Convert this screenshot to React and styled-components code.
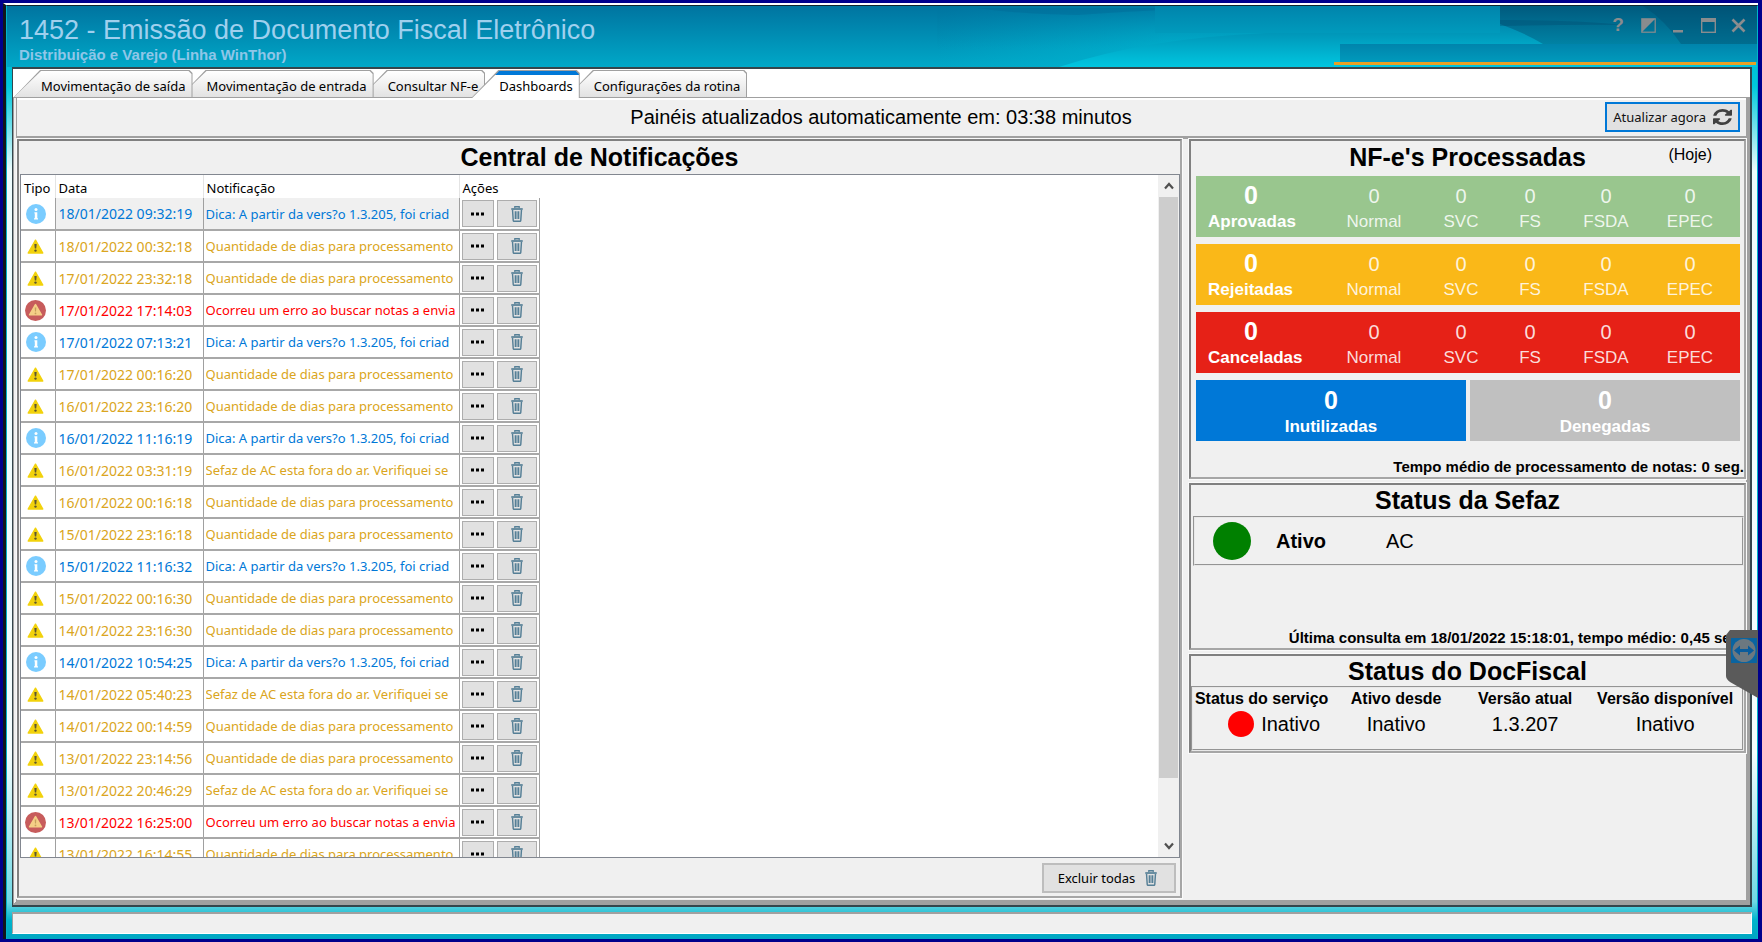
import styled, { createGlobalStyle, css } from "styled-components";

const GlobalStyle = createGlobalStyle`
  * {
    box-sizing: border-box;
  }
  body {
    margin: 0;
    background: #00008c;
    color: #000;
    font-family: "Liberation Sans", Arial, sans-serif;
  }
  button {
    font: inherit;
    color: inherit;
    cursor: pointer;
  }
  h1, h2, p {
    margin: 0;
  }
`;

const tahoma = css`
  font-family: "Noto Sans", Tahoma, sans-serif;
  font-size: 13px;
`;

const Desktop = styled.div`
  height: 100vh;
  padding: 3px 4px 3px 3px;
  background: #00008c;
  display: flex;
`;

const Window = styled.div`
  position: relative;
  flex: 1;
  min-width: 0;
  display: flex;
  flex-direction: column;
  border-top: 2px solid #fff;
  border-left: 3px solid #10161c;
`;

const Frame = styled.div`
  flex: 1;
  min-height: 0;
  display: flex;
  flex-direction: column;
  border-top: 1px solid #10242c;
  border-left: 1px solid #00b4cc;
  border-right: 1px solid #00b4cc;
  background: linear-gradient(
    #00a8c4 0,
    #00c8dc 80px,
    #eefcfd 165px,
    #f4fdfe 80%,
    #70d8e4 96%,
    #00b4cc 98%,
    #00a6c2 100%
  );
`;

const Header = styled.header`
  position: relative;
  height: 61px;
  flex: none;
  display: flex;
  justify-content: space-between;
  color: #9fd0ee;
  background: linear-gradient(#0074a0, #00a8c8);
  overflow: hidden;
`;

const HeaderArt = styled.svg`
  position: absolute;
  top: 0;
  right: 0;
  height: 61px;
  width: 820px;
`;

const Titles = styled.div`
  position: relative;
  padding: 8px 0 0 12px;
`;

const Title = styled.h1`
  font-size: 27px;
  font-weight: 400;
  line-height: 32px;
`;

const Subtitle = styled.p`
  font-size: 15px;
  font-weight: 700;
  line-height: 18px;
  color: #8fc6e8;
`;

const WindowButtons = styled.div`
  position: relative;
  display: flex;
  height: 38px;
  padding-right: 4px;
`;

const WindowButton = styled.button`
  width: 30px;
  padding: 0;
  border: 0;
  background: none;
  color: #8a8c8e;
  display: grid;
  place-items: center;
  font-size: 19px;
  font-weight: 700;
`;

const Main = styled.main`
  flex: 1;
  min-height: 0;
  margin: 0 5px;
  display: flex;
  flex-direction: column;
  background: #fff;
  border: 2px solid #34454c;
  border-left-width: 1px;
`;

const TabBar = styled.div`
  display: flex;
  align-items: flex-end;
  height: 29px;
  flex: none;
  border-bottom: 1px solid #a0a0a0;
`;

const Tab = styled.button`
  ${tahoma}
  position: relative;
  z-index: ${(p) => p.$order};
  height: 28px;
  margin: 0 -14px -1px 0;
  padding: 4px 7px 0 28px;
  border: 0;
  white-space: nowrap;
  background: #a0a0a0;
  clip-path: polygon(0 100%, 27px 0, calc(100% - 3px) 0, 100% 3px, 100% 100%);

  &::before {
    content: "";
    position: absolute;
    inset: 1px 1px ${(p) => (p.$active ? "0" : "1px")} 1px;
    background: ${(p) =>
      p.$active
        ? "linear-gradient(#0078d7 4px, #fff 4px)"
        : "linear-gradient(#fff, #e2e2e2)"};
    clip-path: polygon(0 100%, 27px 0, calc(100% - 3px) 0, 100% 3px, 100% 100%);
  }

  span {
    position: relative;
  }
`;

const Page = styled.div`
  flex: 1;
  min-height: 0;
  display: flex;
  flex-direction: column;
  background: #f0f0f0;
  border-left: 4px double #a0a0a0;
  border-right: 4px solid #a0a0a0;
  border-bottom: 5px solid #a0a0a0;
`;

const Toolbar = styled.div`
  flex: none;
  display: grid;
  grid-template-columns: 1fr auto 1fr;
  align-items: center;
  height: 41px;
  padding: 0 6px 2px 5px;
  border-top: 2px solid #fff;
  border-bottom: 3px solid #a0a0a0;
  font-size: 20px;
`;

const Countdown = styled.p`
  grid-column: 2;
  line-height: 24px;
`;

const RefreshButton = styled.button`
  ${tahoma}
  justify-self: end;
  display: flex;
  align-items: center;
  gap: 7px;
  height: 30px;
  padding: 0 6px;
  background: #e1e1e1;
  border: 2px solid #0078d7;
  color: #111;
`;

const Columns = styled.div`
  flex: 1;
  min-height: 0;
  display: grid;
  grid-template-columns: minmax(0, 1fr) 557px;
  gap: 7px;
  padding-bottom: 2px;
`;

const Panel = styled.section`
  display: flex;
  flex-direction: column;
  min-height: 0;
  height: ${(p) => p.$height || "auto"};
  border: 2px solid;
  border-color: #808080 #a6a6a6 #a6a6a6 #808080;
  outline: 1px solid #fafafa;
`;

const PanelTitle = styled.h2`
  font-size: 25px;
  line-height: ${(p) => (p.$compact ? "30px" : "33px")};
  text-align: center;
`;

const ListBox = styled.div`
  flex: 1;
  min-height: 0;
  display: flex;
  justify-content: space-between;
  margin-left: 1px;
  background: #fff;
  border: 1px solid #828790;
  overflow: hidden;
`;

const ListArea = styled.div`
  flex: 1;
  min-width: 0;
  overflow: hidden;
`;

const Table = styled.table`
  ${tahoma}
  width: 518px;
  table-layout: fixed;
  border-collapse: collapse;
`;

const HeadCell = styled.th`
  width: ${(p) => p.$width};
  height: 23px;
  padding: 2px 3px 0;
  font-weight: 400;
  text-align: left;
  border-right: 1px solid #e4e4e4;

  &:last-child {
    border-right: 0;
  }
`;

const colors = {
  info: "#0078d7",
  warning: "#daa520",
  error: "#ff0000",
};

const Row = styled.tr`
  height: 32px;
  color: ${(p) => colors[p.$type]};
`;

const Cell = styled.td`
  padding: 0 2px;
  border-right: 1px solid #a0a0a0;
  border-bottom: 2px solid #a8a8a8;
  background: ${(p) => (p.$selected ? "#f0f0f0" : "#fff")};
`;

const IconCell = styled(Cell)`
  padding: 0 6px 0 2px;

  svg {
    display: block;
    margin: auto;
  }
`;

const DateCell = styled(Cell)`
  font-size: 14px;
  padding-left: 3px;
  white-space: nowrap;
`;

const Clip = styled.div`
  overflow: hidden;
  white-space: nowrap;
`;

const Actions = styled.div`
  display: flex;
  gap: 3px;
`;

const ActionButton = styled.button`
  width: ${(p) => p.$width};
  height: 27px;
  padding: 0;
  display: grid;
  place-items: center;
  background: #e1e1e1;
  border: 1px solid #adadad;
`;

const Scrollbar = styled.div`
  width: 21px;
  flex: none;
  display: flex;
  flex-direction: column;
  background: #f0f0f0;
`;

const ScrollButton = styled.button`
  height: 22px;
  flex: none;
  padding: 0;
  border: 0;
  background: none;
  display: grid;
  place-items: center;
`;

const Track = styled.div`
  flex: 1;
`;

const Thumb = styled.div`
  height: 91%;
  background: #cdcdcd;
  margin: 0 1px;
`;

const ListFooter = styled.div`
  flex: none;
  display: flex;
  justify-content: flex-end;
  padding: 5px 4px 3px;
`;

const DeleteAllButton = styled.button`
  ${tahoma}
  display: flex;
  align-items: center;
  justify-content: center;
  gap: 10px;
  width: 134px;
  height: 30px;
  padding: 0 3px 0 0;
  background: #e1e1e1;
  border: 2px solid #bdbdbd;
`;

const Side = styled.div`
  display: flex;
  flex-direction: column;
  gap: 4px;
`;

const TitleRow = styled.div`
  display: grid;
  grid-template-columns: 1fr auto 1fr;
  height: 35px;
`;

const Today = styled.span`
  justify-self: end;
  padding: 5px 32px 0 0;
  font-size: 16px;
`;

const Cards = styled.div`
  display: flex;
  flex-direction: column;
  gap: 7px;
  padding: 0 4px 0 5px;
`;

const Card = styled.div`
  display: grid;
  grid-template-columns: 118fr 120fr 54fr 84fr 68fr 100fr;
  height: 61px;
  padding-top: 6px;
  background: ${(p) => p.$color};
  color: #fff;
`;

const Halves = styled.div`
  display: grid;
  grid-template-columns: 1fr 1fr;
  gap: 4px;
`;

const Half = styled.div`
  height: 61px;
  padding-top: 7px;
  background: ${(p) => p.$color};
  color: #fff;
  text-align: center;
  font-weight: 700;
`;

const Total = styled.div`
  font-weight: 700;
`;

const Counter = styled.div`
  text-align: center;
  color: rgba(255, 255, 255, 0.85);
`;

const BigNumber = styled.div`
  font-size: 25px;
  line-height: 26px;
  margin: 0 8px 3px 0;
  text-align: center;

  ${Half} & {
    margin-right: 0;
  }
`;

const Number = styled.div`
  font-size: 20px;
  line-height: 29px;
`;

const Label = styled.div`
  font-size: 17px;
  line-height: 22px;
  padding-left: ${(p) => (p.$inset ? "12px" : "0")};
`;

const FootNote = styled.p`
  margin-top: auto;
  font-size: 15px;
  font-weight: 700;
  line-height: 20px;
  text-align: right;
  white-space: nowrap;
`;

const StateRow = styled.div`
  display: flex;
  align-items: center;
  height: 50px;
  margin: 1px 0 0 2px;
  padding-left: 18px;
  border: 2px groove #e8e8e8;
  font-size: 20px;

  strong {
    margin: 0 60px 0 25px;
  }
`;

const Light = styled.span`
  flex: none;
  width: ${(p) => p.$size};
  height: ${(p) => p.$size};
  border-radius: 50%;
  background: ${(p) => p.$color};
`;

const ServiceTable = styled.table`
  width: 100%;
  height: 65px;
  border: 2px groove #e8e8e8;
  border-collapse: separate;
  border-spacing: 0;
  table-layout: fixed;

  th {
    padding: 0;
    font-size: 16px;
    line-height: 22px;
    white-space: nowrap;
  }
  td {
    padding: 0 0 12px;
    font-size: 20px;
    line-height: 26px;
    text-align: center;
  }
`;

const Service = styled.span`
  display: flex;
  align-items: center;
  justify-content: center;
  gap: 7px;
  padding-left: 25px;
`;

const StatusBar = styled.footer`
  flex: none;
  height: 22px;
  margin: 5px;
  background: #f0f0f0;
  border: 1px solid #fff;
  border-top: 2px solid #a0a0a0;
  border-left-color: #a0a0a0;
`;

const RemoteTab = styled.button`
  position: absolute;
  right: 0;
  top: 625px;
  z-index: 20;
  width: 32px;
  height: 68px;
  padding: 0;
  border: 0;
  background: none;

  svg {
    display: block;
  }
`;

const InfoIcon = () => (
  <svg width="20" height="20" viewBox="0 0 20 20">
    <circle cx="10" cy="10" r="10" fill="#7accff" />
    <circle cx="10" cy="5.6" r="1.5" fill="#fff" />
    <path d="M8.4 8.2h2.900v6h.7v1.300H8v-1.300h.8V9.500h-.4z" fill="#fff" />
  </svg>
);

const WarningIcon = () => (
  <svg width="17" height="15" viewBox="0 0 17 15">
    <path d="M8.5 1.2 L15.8 14 H1.2 Z" fill="#f2d20c" stroke="#f2d20c" strokeWidth="1.4" strokeLinejoin="round" />
    <path d="M7.3 5h2.4l-.5 4.6H7.8z" fill="#5d5630" />
    <circle cx="8.5" cy="11.6" r="1.2" fill="#5d5630" />
  </svg>
);

const ErrorIcon = () => (
  <svg width="21" height="21" viewBox="0 0 21 21">
    <circle cx="10.5" cy="10.5" r="10.5" fill="#c75c5c" />
    <path d="M10.5 4.6 L16.4 14.8 H4.6 Z" fill="#f5cf87" stroke="#f5cf87" strokeWidth="1.6" strokeLinejoin="round" />
    <path d="M9.7 7.6h1.6l-.3 4h-1z" fill="#c7a05c" />
    <circle cx="10.5" cy="13.4" r=".9" fill="#c7a05c" />
  </svg>
);

const DotsIcon = () => (
  <svg width="15" height="4" viewBox="0 0 15 4">
    <path d="M1 .5h3v3H1zM6 .5h3v3H6zM11 .5h3v3h-3z" fill="#000" />
  </svg>
);

const TrashIcon = () => (
  <svg width="12" height="16" viewBox="0 0 14 17" preserveAspectRatio="none" fill="none" stroke="#557f96">
    <path d="M4.4 2.4V.8h5.2v1.6" strokeWidth="1.4" />
    <path d="M.3 3.2h13.4" strokeWidth="1.8" />
    <path d="M1.8 4.2l.8 11.2q.1.8.9.8h7q.8 0 .9-.8l.8-11.2" strokeWidth="1.7" />
    <path d="M5.4 5.6v8.2M8.6 5.6v8.2" strokeWidth="2.2" />
  </svg>
);

const RefreshIcon = () => (
  <svg width="19" height="16" viewBox="0 0 1536 1536" preserveAspectRatio="none" fill="#404040">
    <path d="M1511 928q0 5-1 7-64 268-268 434.5t-478 166.5q-146 0-282.5-55t-243.5-157l-129 129q-19 19-45 19t-45-19-19-45v-448q0-26 19-45t45-19h448q26 0 45 19t19 45-19 45l-137 137q71 66 161 102t187 36q134 0 250-65t186-179q11-17 53-117 8-23 30-23h192q13 0 22.5 9.5t9.5 22.5zM1536 128v448q0 26-19 45t-45 19h-448q-26 0-45-19t-19-45 19-45l138-138q-148-137-349-137-134 0-250 65t-186 179q-11 17-53 117-8 23-30 23h-199q-13 0-22.5-9.5t-9.5-22.5v-7q65-268 270-434.5t480-166.5q146 0 284 55.5t245 156.5l130-129q19-19 45-19t45 19 19 45z" />
  </svg>
);

const Chevron = ({ down }) => (
  <svg width="10" height="8" viewBox="0 0 10 8" fill="none" stroke="#505050" strokeWidth="2.2">
    <path d={down ? "M1 1.5l4 4.5 4-4.5" : "M1 6.5L5 2l4 4.5"} />
  </svg>
);

const icons = {
  info: InfoIcon,
  warning: WarningIcon,
  error: ErrorIcon,
};

const tip = "Dica: A partir da vers?o 1.3.205, foi criad";
const days = "Quantidade de dias para processamento";
const fail = "Ocorreu um erro ao buscar notas a envia";
const sefaz = "Sefaz de AC esta fora do ar. Verifiquei se";

const notifications = [
  ["info", "18/01/2022 09:32:19", tip],
  ["warning", "18/01/2022 00:32:18", days],
  ["warning", "17/01/2022 23:32:18", days],
  ["error", "17/01/2022 17:14:03", fail],
  ["info", "17/01/2022 07:13:21", tip],
  ["warning", "17/01/2022 00:16:20", days],
  ["warning", "16/01/2022 23:16:20", days],
  ["info", "16/01/2022 11:16:19", tip],
  ["warning", "16/01/2022 03:31:19", sefaz],
  ["warning", "16/01/2022 00:16:18", days],
  ["warning", "15/01/2022 23:16:18", days],
  ["info", "15/01/2022 11:16:32", tip],
  ["warning", "15/01/2022 00:16:30", days],
  ["warning", "14/01/2022 23:16:30", days],
  ["info", "14/01/2022 10:54:25", tip],
  ["warning", "14/01/2022 05:40:23", sefaz],
  ["warning", "14/01/2022 00:14:59", days],
  ["warning", "13/01/2022 23:14:56", days],
  ["warning", "13/01/2022 20:46:29", sefaz],
  ["error", "13/01/2022 16:25:00", fail],
  ["warning", "13/01/2022 16:14:55", days],
];

const tabs = [
  "Movimentação de saída",
  "Movimentação de entrada",
  "Consultar NF-e",
  "Dashboards",
  "Configurações da rotina",
];

const totals = [
  ["Aprovadas", "#99c68e"],
  ["Rejeitadas", "#fab818"],
  ["Canceladas", "#e62117"],
];

const channels = ["Normal", "SVC", "FS", "FSDA", "EPEC"];

const AppHeader = () => (
  <Header>
    <HeaderArt viewBox="0 0 820 61" preserveAspectRatio="none" aria-hidden="true">
      <defs>
        <linearGradient id="glow" x1="0" x2="1" y1="0" y2="0">
          <stop offset="0" stopColor="#00b4d0" stopOpacity="0" />
          <stop offset=".28" stopColor="#00b4d0" stopOpacity=".75" />
          <stop offset="1" stopColor="#00b0cc" />
        </linearGradient>
        <linearGradient id="top" x1="0" x2="0" y1="0" y2="1">
          <stop offset="0" stopColor="#0074a0" stopOpacity=".9" />
          <stop offset=".7" stopColor="#0090b4" stopOpacity="0" />
        </linearGradient>
        <linearGradient id="hill" x1="0" x2="0" y1="0" y2="1">
          <stop offset="0" stopColor="#008cb0" />
          <stop offset="1" stopColor="#00c6e0" />
        </linearGradient>
        <linearGradient id="dark" x1="0" x2="0" y1="0" y2="1">
          <stop offset="0" stopColor="#005a7e" />
          <stop offset="1" stopColor="#0082a4" />
        </linearGradient>
        <linearGradient id="box" x1="0" x2="0" y1="0" y2="1">
          <stop offset="0" stopColor="#0084ac" />
          <stop offset="1" stopColor="#009abc" />
        </linearGradient>
      </defs>
      <rect width="820" height="61" fill="url(#glow)" />
      <rect width="820" height="61" fill="url(#top)" />
      <path d="M40 2 H300 Q220 3 140 9 Q80 8 40 2Z" fill="#006a96" opacity=".45" />
      <path d="M122 61 Q210 32 330 27 L560 20 H820 V61 Z" fill="url(#hill)" />
      <path d="M480 0 H820 V38 H606 Q590 28 563 18 Z" fill="url(#dark)" />
      <path d="M563 14 Q640 14 690 19 Q640 18 563 20Z" fill="#005478" opacity=".5" />
      <path d="M706 0 Q728 14 744 38 H820 V0 Z" fill="#00486a" opacity=".35" />
      <rect x="218" y="0" width="345" height="27" fill="url(#box)" />
      <rect x="403" y="38" width="417" height="18" fill="url(#box)" />
      <rect x="397" y="56" width="422" height="3" fill="#e8a024" />
    </HeaderArt>
    <Titles>
      <Title>1452 - Emissão de Documento Fiscal Eletrônico</Title>
      <Subtitle>Distribuição e Varejo (Linha WinThor)</Subtitle>
    </Titles>
    <WindowButtons>
      <WindowButton aria-label="Ajuda">?</WindowButton>
      <WindowButton aria-label="Tema">
        <svg width="15" height="15" viewBox="0 0 15 15">
          <path d="M1 1h13L1 14z" fill="currentColor" />
          <rect x=".8" y=".8" width="13.4" height="13.4" fill="none" stroke="currentColor" strokeWidth="1.2" />
        </svg>
      </WindowButton>
      <WindowButton aria-label="Minimizar">
        <svg width="15" height="15" viewBox="0 0 15 15">
          <path d="M2 12h10v2.5H2z" fill="currentColor" />
        </svg>
      </WindowButton>
      <WindowButton aria-label="Maximizar">
        <svg width="15" height="15" viewBox="0 0 15 15">
          <path d="M0 0h15v4H0z" fill="currentColor" />
          <rect x=".7" y=".7" width="13.6" height="13.6" fill="none" stroke="currentColor" strokeWidth="1.4" />
        </svg>
      </WindowButton>
      <WindowButton aria-label="Fechar">
        <svg width="15" height="15" viewBox="0 0 15 15">
          <path d="M1.5 1.5l12 12M13.5 1.5l-12 12" stroke="currentColor" strokeWidth="2.6" />
        </svg>
      </WindowButton>
    </WindowButtons>
  </Header>
);

const Notifications = () => (
  <Panel>
    <PanelTitle>Central de Notificações</PanelTitle>
    <ListBox>
      <ListArea>
        <Table>
          <thead>
            <tr>
              <HeadCell $width="34px">Tipo</HeadCell>
              <HeadCell $width="148px">Data</HeadCell>
              <HeadCell $width="256px">Notificação</HeadCell>
              <HeadCell $width="80px">Ações</HeadCell>
            </tr>
          </thead>
          <tbody>
            {notifications.map(([type, date, text], i) => {
              const Icon = icons[type];
              return (
                <Row key={date} $type={type}>
                  <IconCell>
                    <Icon />
                  </IconCell>
                  <DateCell $selected={i === 0}>{date}</DateCell>
                  <Cell $selected={i === 0}>
                    <Clip>{text}</Clip>
                  </Cell>
                  <Cell>
                    <Actions>
                      <ActionButton $width="32px" aria-label="Detalhes">
                        <DotsIcon />
                      </ActionButton>
                      <ActionButton $width="40px" aria-label="Excluir">
                        <TrashIcon />
                      </ActionButton>
                    </Actions>
                  </Cell>
                </Row>
              );
            })}
          </tbody>
        </Table>
      </ListArea>
      <Scrollbar>
        <ScrollButton aria-label="Subir">
          <Chevron />
        </ScrollButton>
        <Track>
          <Thumb />
        </Track>
        <ScrollButton aria-label="Descer">
          <Chevron down />
        </ScrollButton>
      </Scrollbar>
    </ListBox>
    <ListFooter>
      <DeleteAllButton>
        Excluir todas <TrashIcon />
      </DeleteAllButton>
    </ListFooter>
  </Panel>
);

const Processed = () => (
  <Panel $height="340px">
    <TitleRow>
      <span />
      <PanelTitle>NF-e's Processadas</PanelTitle>
      <Today>(Hoje)</Today>
    </TitleRow>
    <Cards>
      {totals.map(([label, color]) => (
        <Card key={label} $color={color}>
          <Total>
            <BigNumber>0</BigNumber>
            <Label $inset>{label}</Label>
          </Total>
          {channels.map((name) => (
            <Counter key={name}>
              <Number>0</Number>
              <Label>{name}</Label>
            </Counter>
          ))}
        </Card>
      ))}
      <Halves>
        <Half $color="#0078d7">
          <BigNumber>0</BigNumber>
          <Label>Inutilizadas</Label>
        </Half>
        <Half $color="#c0c0c0">
          <BigNumber>0</BigNumber>
          <Label>Denegadas</Label>
        </Half>
      </Halves>
    </Cards>
    <FootNote>Tempo médio de processamento de notas: 0 seg.</FootNote>
  </Panel>
);

const Sefaz = () => (
  <Panel $height="167px">
    <PanelTitle $compact>Status da Sefaz</PanelTitle>
    <StateRow>
      <Light $size="38px" $color="#008000" />
      <strong>Ativo</strong>
      <span>AC</span>
    </StateRow>
    <FootNote>Última consulta em 18/01/2022 15:18:01, tempo médio: 0,45 seg.</FootNote>
  </Panel>
);

const DocFiscal = () => (
  <Panel>
    <PanelTitle $compact>Status do DocFiscal</PanelTitle>
    <ServiceTable>
      <colgroup>
        <col width="25%" />
        <col width="24%" />
        <col width="23%" />
        <col width="28%" />
      </colgroup>
      <thead>
        <tr>
          <th>Status do serviço</th>
          <th>Ativo desde</th>
          <th>Versão atual</th>
          <th>Versão disponível</th>
        </tr>
      </thead>
      <tbody>
        <tr>
          <td>
            <Service>
              <Light $size="26px" $color="#ff0000" />
              Inativo
            </Service>
          </td>
          <td>Inativo</td>
          <td>1.3.207</td>
          <td>Inativo</td>
        </tr>
      </tbody>
    </ServiceTable>
  </Panel>
);

const App = () => {
  return (
    <Desktop>
      <GlobalStyle />
      <Window>
        <Frame>
          <AppHeader />
          <Main>
            <TabBar role="tablist">
              {tabs.map((name, i) => (
                <Tab
                  key={name}
                  role="tab"
                  aria-selected={name === "Dashboards"}
                  $active={name === "Dashboards"}
                  $order={name === "Dashboards" ? 9 : 5 - i}
                >
                  <span>{name}</span>
                </Tab>
              ))}
            </TabBar>
            <Page>
              <Toolbar>
                <Countdown>Painéis atualizados automaticamente em: 03:38 minutos</Countdown>
                <RefreshButton>
                  Atualizar agora <RefreshIcon />
                </RefreshButton>
              </Toolbar>
              <Columns>
                <Notifications />
                <Side>
                  <Processed />
                  <Sefaz />
                  <DocFiscal />
                </Side>
              </Columns>
            </Page>
          </Main>
          <StatusBar />
        </Frame>
        <RemoteTab aria-label="TeamViewer">
          <svg width="32" height="68" viewBox="0 0 32 68">
            <path d="M4 0H32V68L4 52Q0 49 0 46V5Z" fill="#5a5a5a" />
            <rect x="5" y="8" width="26" height="25" fill="#0a64a0" />
            <circle cx="18" cy="20.5" r="11.5" fill="#6c7880" />
            <path d="M8 20.5l6-5v3.5h8v-3.5l6 5-6 5v-3.5h-8v3.5z" fill="#0a5c9c" />
          </svg>
        </RemoteTab>
      </Window>
    </Desktop>
  );
};

export default App;
